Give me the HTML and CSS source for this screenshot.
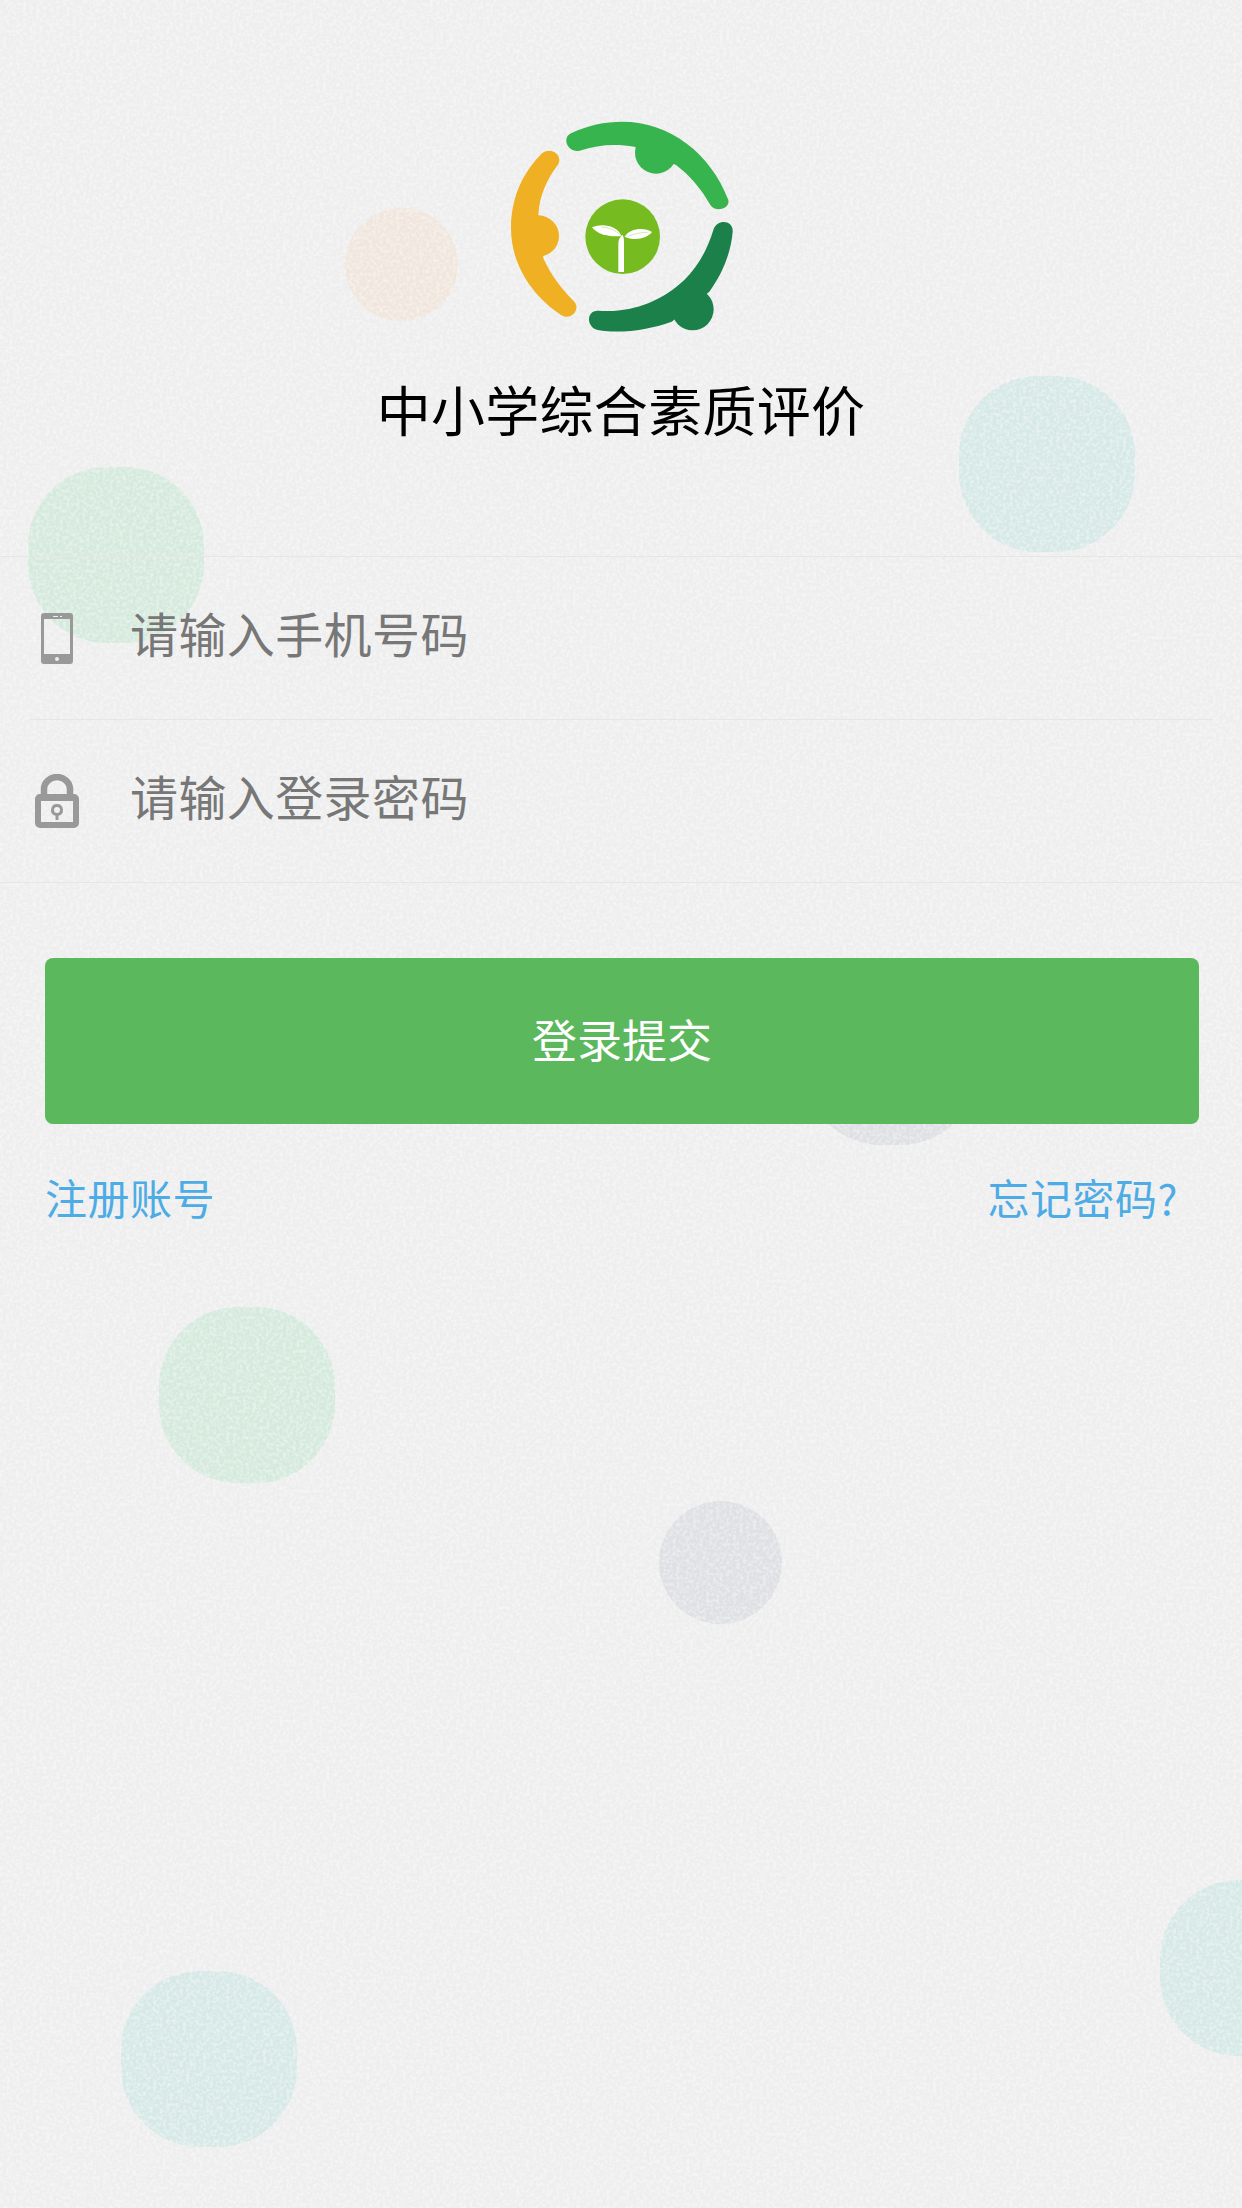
FILE: index.html
```html
<!DOCTYPE html>
<html lang="zh-CN">
<head>
<meta charset="utf-8">
<title>中小学综合素质评价</title>
<link rel="stylesheet" href="styles.css">
</head>
<body>
<div class="backdrop" aria-hidden="true">
  <span class="blob orange"></span>
  <span class="blob teal teal-a"></span>
  <span class="blob green green-a"></span>
  <span class="blob grey grey-a"></span>
  <span class="blob green green-b"></span>
  <span class="blob grey grey-b"></span>
  <span class="blob teal teal-b"></span>
  <span class="blob teal teal-c"></span>
  <svg class="noise" width="1242" height="2208">
    <filter id="grain" x="0" y="0" width="100%" height="100%">
      <feTurbulence type="fractalNoise" baseFrequency="0.3" numOctaves="3" seed="4"/>
      <feColorMatrix type="matrix" values="0 0 0 0 1  0 0 0 0 1  0 0 0 0 1  0 0 0 3 -1.2"/>
    </filter>
    <rect width="1242" height="2208" filter="url(#grain)"/>
  </svg>
</div>
<main class="page">
  <header class="brand">
    <svg class="logo" width="280" height="260" viewBox="0 0 840 780">
      <path fill="#38b44f" d="M270 100 C320 76 370 65 425 65 C565 65 690 160 742 300 C748 325 705 340 688 315 C660 265 625 225 585 195 L460 140 C400 130 350 135 296 152 C262 160 240 115 270 100 Z"/>
      <circle cx="525" cy="158" r="63" fill="#38b44f"/>
      <path fill="#1b8049" d="M755 395 C750 460 722 525 685 575 L572 665 C500 690 420 702 350 690 C315 682 315 630 352 632 C450 640 540 605 610 540 C655 495 680 445 697 390 C708 355 758 360 755 395 Z"/>
      <circle cx="635" cy="628" r="63" fill="#1b8049"/>
      <path fill="#f0b023" d="M178 165 C120 225 90 300 90 385 C90 490 150 585 240 645 C270 665 305 625 275 600 C240 565 210 525 187 475 L172 345 C175 285 200 235 230 195 C250 165 205 135 178 165 Z"/>
      <circle cx="172" cy="408" r="62" fill="#f0b023"/>
      <circle cx="425" cy="410" r="112" fill="#76bc21"/>
      <path d="M333 382 C365 368 410 378 421 408 C390 412 350 405 333 382 Z" fill="#fff"/>
      <path d="M431 410 C445 385 490 380 513 396 C500 415 460 424 431 410 Z" fill="#fff"/>
      <path d="M412 516 V430 C412 420 416 412 424 404 C429 412 429 420 429 430 V516 Z" fill="#fff"/>
      <path d="M360 381 C385 382 405 392 418 405 M440 409 C460 401 480 397 500 397" fill="none" stroke="#b9dc8f" stroke-width="2"/>
    </svg>
    <h1 class="title">中小学综合素质评价</h1>
  </header>

  <form class="fields">
    <label class="field">
      <span class="field-icon">
        <svg width="32" height="51" viewBox="0 0 32 51">
          <path fill="#999" fill-rule="evenodd" d="M3 0H29A3 3 0 0 1 32 3V48A3 3 0 0 1 29 51H3A3 3 0 0 1 0 48V3A3 3 0 0 1 3 0ZM3 6V41H29V6Z"/>
          <circle cx="16" cy="46" r="2" fill="#eee"/>
          <rect x="12" y="3" width="5" height="1" fill="#eee"/>
          <rect x="19" y="3" width="2" height="1" fill="#eee"/>
        </svg>
      </span>
      <span class="placeholder">请输入手机号码</span>
    </label>
    <div class="divider"></div>
    <label class="field">
      <span class="field-icon">
        <svg width="44" height="55" viewBox="0 0 44 55">
          <path fill="none" stroke="#999" stroke-width="6.500" d="M9 24V15A13 12 0 0 1 35 15V24"/>
          <path fill="#999" fill-rule="evenodd" d="M5 20H39A5 5 0 0 1 44 25V49A5 5 0 0 1 39 54H5A5 5 0 0 1 0 49V25A5 5 0 0 1 5 20ZM6 27V48H38V27Z"/>
          <path fill="#999" fill-rule="evenodd" d="M22 30A6 6 0 0 1 23.500 41.800V46H20.500V41.800A6 6 0 0 1 22 30ZM22 33A3 3 0 1 0 22 39A3 3 0 1 0 22 33Z"/>
        </svg>
      </span>
      <span class="placeholder">请输入登录密码</span>
    </label>
  </form>

  <button class="submit" type="button">登录提交</button>

  <nav class="links">
    <a class="link">注册账号</a>
    <a class="link">忘记密码?</a>
  </nav>
</main>
</body>
</html>
```
FILE: styles.css
```css
* { box-sizing: border-box; }

html, body {
  margin: 0;
  padding: 0;
}

body {
  width: 1242px;
  height: 2208px;
  overflow: hidden;
  position: relative;
  background: #eeeeee;
  font-family: "Noto Sans CJK SC", "Noto Sans", sans-serif;
}

.backdrop {
  position: absolute;
  inset: 0;
  overflow: hidden;
}

.noise {
  position: absolute;
  left: 0;
  top: 0;
  opacity: 0.4;
}

.blob {
  position: absolute;
  width: 176px;
  height: 176px;
  border-radius: 45%;
}

.orange { left: 345px; top: 208px; width: 113px; height: 113px; border-radius: 50%; background: #f0e6dd; }
.teal { background: #d6e9e6; }
.green { background: #d5eadd; }
.grey { background: #dfe0e4; }

.teal-a { left: 959px; top: 376px; }
.teal-b { left: 121px; top: 1971px; }
.teal-c { left: 1160px; top: 1880px; }
.green-a { left: 28px; top: 467px; }
.green-b { left: 159px; top: 1307px; }
.grey-a { left: 803px; top: 969px; }
.grey-b { left: 659px; top: 1501px; width: 123px; height: 123px; border-radius: 50%; }

.page {
  position: relative;
  display: flex;
  flex-direction: column;
}

.brand {
  display: flex;
  flex-direction: column;
  align-items: center;
  padding-top: 100px;
}

.logo { display: block; }

.title {
  margin: 0 0 2px;
  font-size: 54px;
  font-weight: 400;
  line-height: 98px;
  letter-spacing: 0.3px;
  color: #000;
}

.fields {
  margin: 96px 0 0;
  border-top: 1px solid #e6e6e6;
  border-bottom: 1px solid #e6e6e6;
}

.field {
  display: flex;
  align-items: center;
  height: 162px;
}

.field-icon {
  width: 114px;
  margin-right: 16px;
  display: flex;
  justify-content: center;
  flex: none;
}

.field-icon svg { display: block; }

.placeholder {
  margin-top: -12px;
  font-size: 48px;
  font-weight: 400;
  line-height: 60px;
  letter-spacing: 0.4px;
  color: #777;
}

.divider {
  height: 1px;
  margin: 0 30px;
  background: #e6e6e6;
}

.submit {
  display: block;
  margin: 75px 43px 0 45px;
  height: 166px;
  padding: 0 0 5px;
  border: 0;
  border-radius: 8px;
  background: #5cb85c;
  color: #fff;
  font-family: inherit;
  font-size: 45px;
  font-weight: 400;
}

.links {
  display: flex;
  justify-content: space-between;
  margin-top: 43px;
  padding: 0 64px 0 45px;
}

.link {
  font-size: 42px;
  font-weight: 400;
  line-height: 60px;
  letter-spacing: 0.5px;
  color: #4dabe6;
}
```
